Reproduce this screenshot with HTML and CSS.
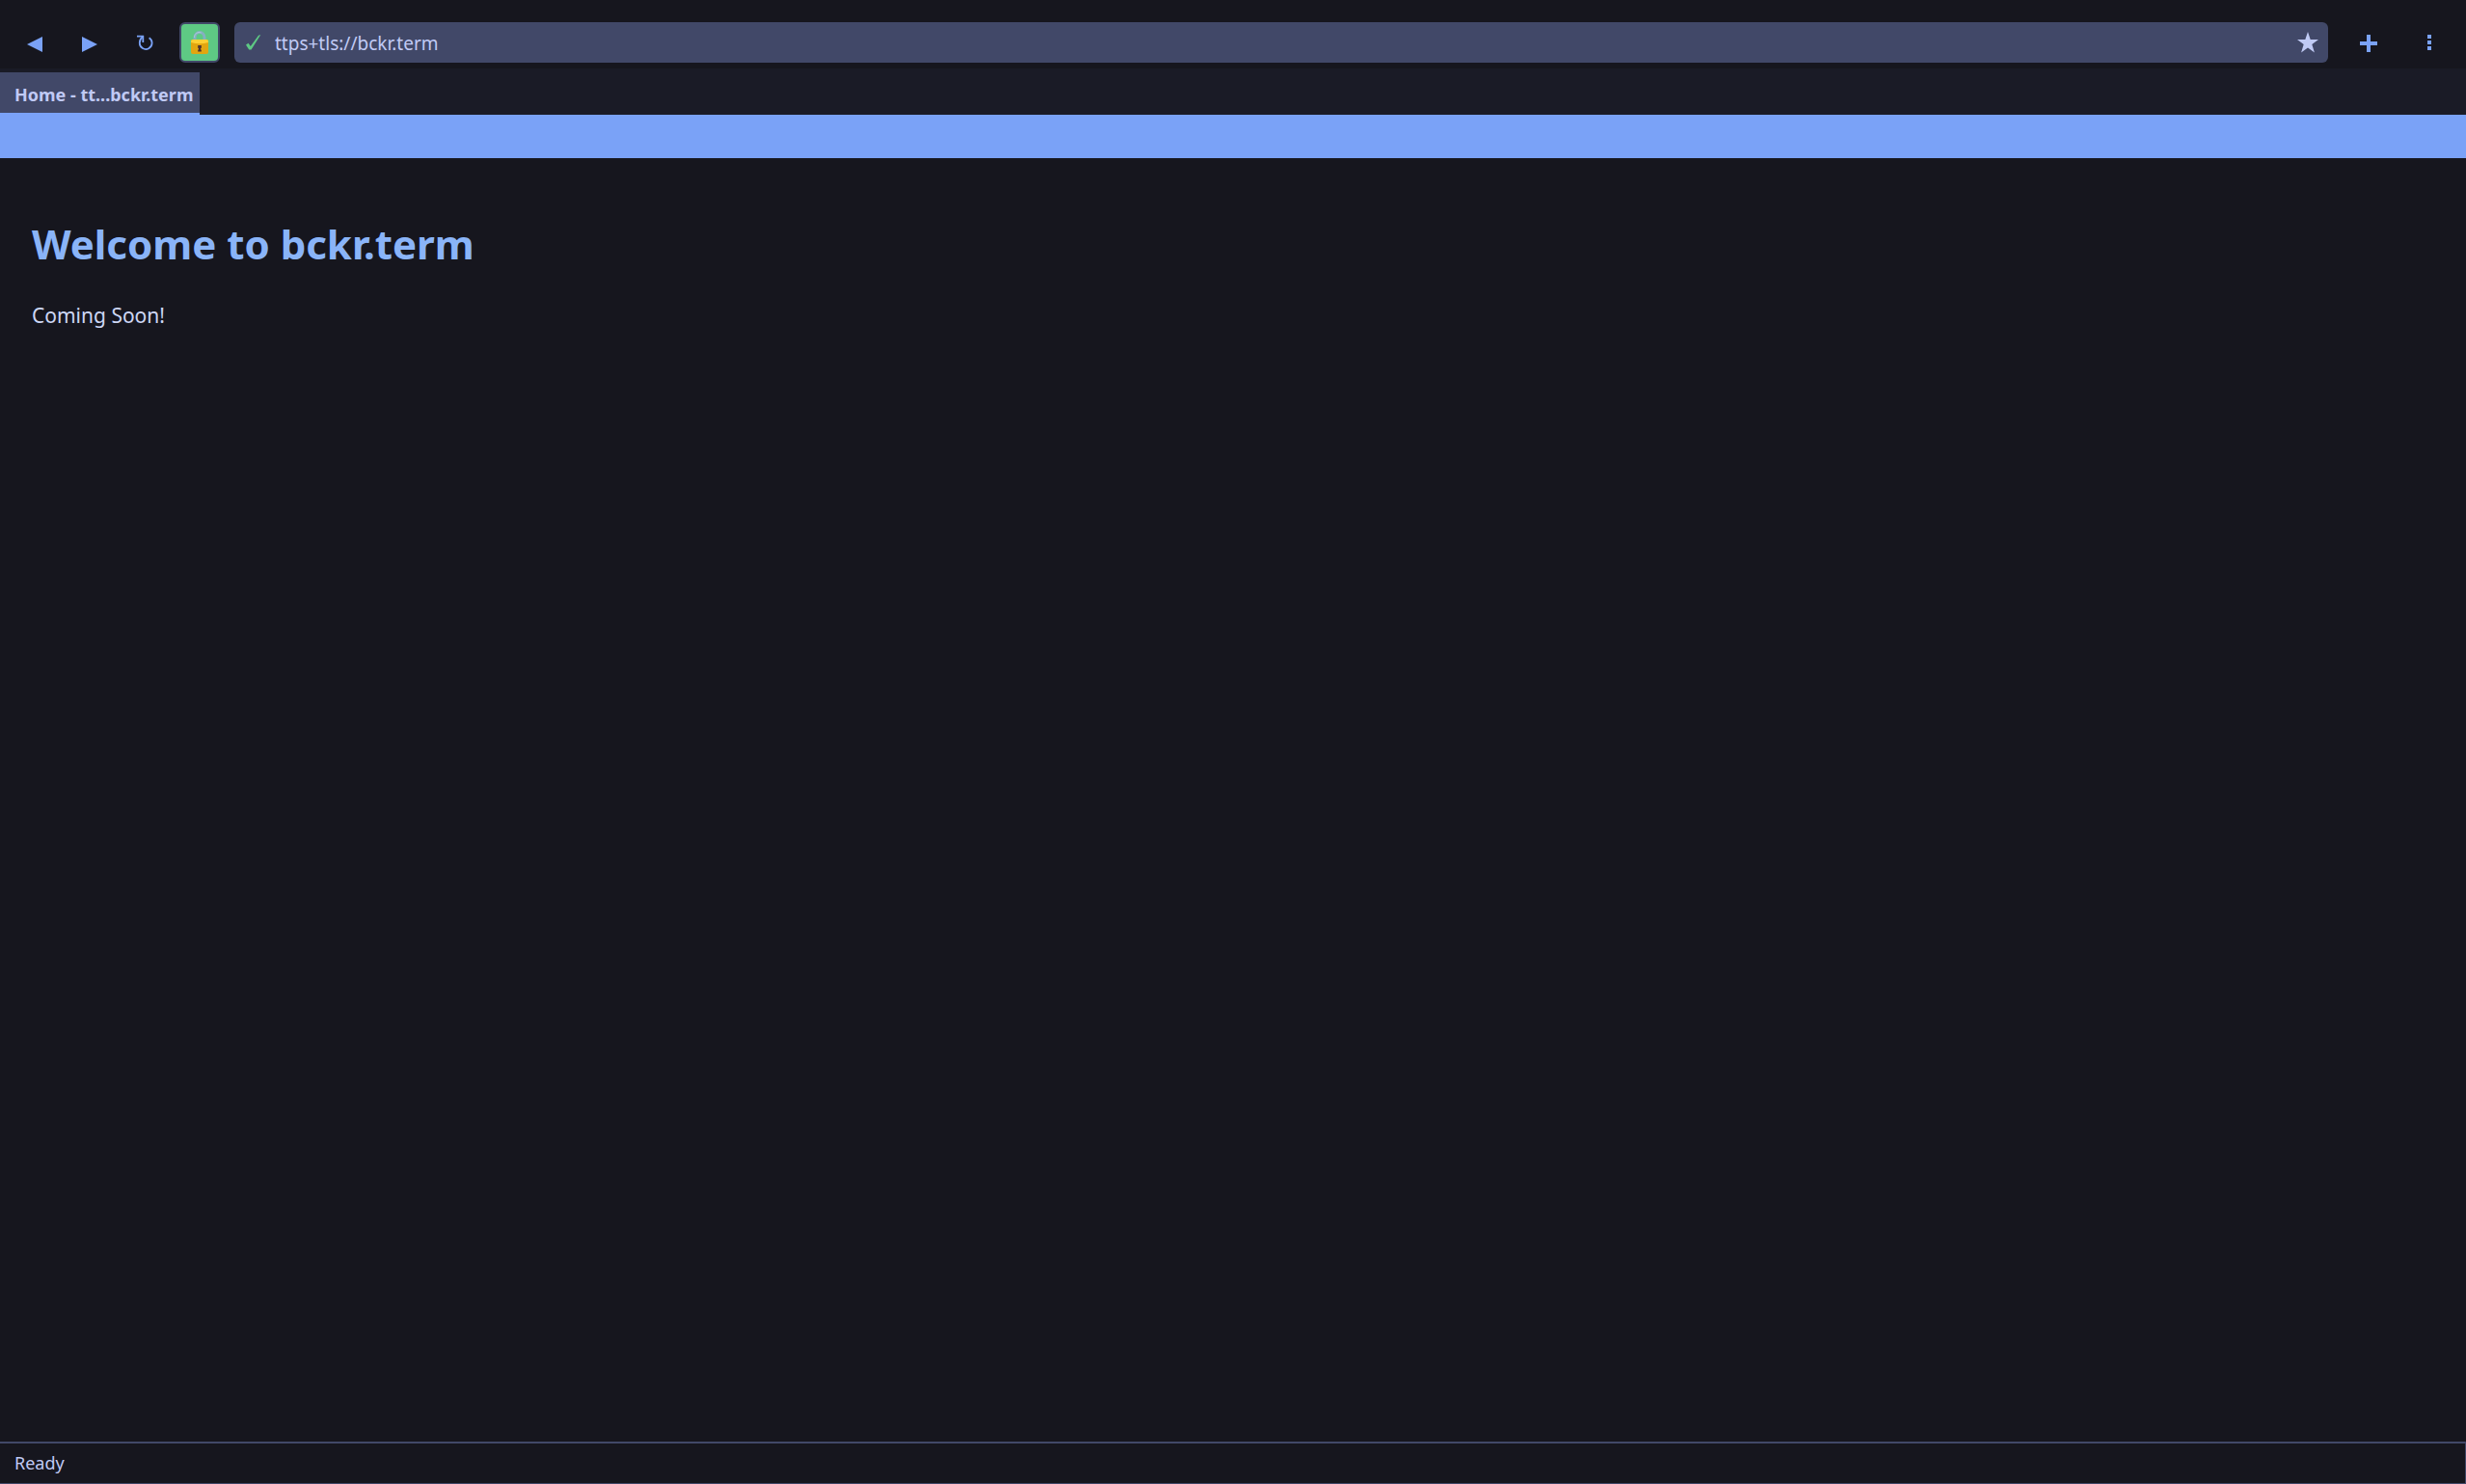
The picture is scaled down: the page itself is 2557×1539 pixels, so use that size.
FILE: index.html
```html
<!DOCTYPE html>
<html lang="en">
<head>
    <meta charset="UTF-8">
    <meta name="viewport" content="width=device-width, initial-scale=1.0">
    <title>Home - bckr.term</title>
    <link rel="stylesheet" href="styles.css">
</head>
<body>

    <header class="toolbar">
        <button class="tool" aria-label="Back">
            <svg width="16" height="20" viewBox="0 0 16 20"><path d="M16 4v16L0 12z" fill="currentColor"/></svg>
        </button>
        <button class="tool" aria-label="Forward">
            <svg width="16" height="20" viewBox="0 0 16 20"><path d="M0 4v16l16-8z" fill="currentColor"/></svg>
        </button>
        <button class="tool" aria-label="Reload">
            <svg width="18" height="18" viewBox="0 0 18 18" fill="none" stroke="currentColor" stroke-width="1.8">
                <path d="M1 2.700h6.300V9"/>
                <path d="M7 3C4.500 5 3.700 7.200 3.800 9.500A6.400 6.400 0 1 0 13.600 4.200"/>
            </svg>
        </button>
        <button class="tool lock" aria-label="Secure connection">
            <svg width="18" height="26" viewBox="0 0 18 26">
                <path d="M4 13V8a5 5.500 0 0 1 10 0V13" fill="none" stroke="#84b0c1" stroke-width="3"/>
                <path d="M3.600 8a5 5 0 0 1 7-5" fill="none" stroke="#b0ccd8" stroke-width="1"/>
                <rect y="10" width="18" height="15" rx="2" fill="#e2a610"/>
                <path d="M0 12a2 2 0 0 1 2-2h14a2 2 0 0 1 2 2v1q-9 2.500-18 0z" fill="#fdd033"/>
                <path d="M7.200 16h3.600v2.800l-.8.700v1h.8v2H7.200v-2H8v-1l-.8-.7z" fill="#4e342e"/>
            </svg>
        </button>

        <div class="address">
            <svg width="16" height="18" viewBox="0 0 16 18"><path d="M0 11.500L2.500 9.800L4.800 13L13 1.800L15.300 1L5.500 16.500H3.200z" fill="#5ec984"/></svg>
            <input class="url" type="text" aria-label="Address" value="ttps+tls://bckr.term">
            <button class="star" aria-label="Bookmark">
                <svg width="22" height="22" viewBox="0 0 22 22"><path d="M11 0l2.700 8H22l-6.700 5 2.600 8.500L11 16.400l-6.900 5.100L6.700 13 0 8h8.300z" fill="currentColor"/></svg>
            </button>
        </div>

        <button class="tool new-tab" aria-label="New tab">
            <svg width="18" height="20" viewBox="0 0 18 20"><path d="M7 2h4v7h7v4h-7v7H7v-7H0V9h7z" fill="currentColor"/></svg>
        </button>
        <button class="tool" aria-label="Menu">
            <svg width="4" height="16" viewBox="0 0 4 16"><path d="M0 0h4v4H0zM0 6h4v4H0zM0 12h4v4H0z" fill="currentColor"/></svg>
        </button>
    </header>

    <nav class="tabs">
        <a class="tab" href="#home">Home - tt...bckr.term</a>
    </nav>
    <div class="banner"></div>

    <main class="content" id="home">
        <h1>Welcome to bckr.term</h1>
        <p>Coming Soon!</p>
    </main>

    <footer class="status">Ready</footer>

</body>
</html>
```
FILE: styles.css
```css
* {
    box-sizing: border-box;
}
body {
    display: flex;
    flex-direction: column;
    min-height: 100vh;
    margin: 0;
    background-color: #16161e;
    color: #c0caf5;
    font-family: "Noto Sans", sans-serif;
    font-size: 18px;
    line-height: 24px;
}
svg {
    display: block;
}
button {
    padding: 0;
    border: none;
    background: none;
    color: #7aa2f7;
}

/* toolbar */
.toolbar {
    display: flex;
    gap: 15px;
    padding: 23px 17px 6px 15px;
}
.tool {
    display: flex;
    align-items: center;
    justify-content: center;
    width: 42px;
    height: 42px;
}
.lock {
    background-color: #5ec984;
    border: 2px solid #414868;
    border-radius: 6px;
}
.new-tab {
    width: 54px;
}
.address {
    display: flex;
    flex: 1;
    align-items: center;
    gap: 14px;
    padding: 0 10px 0 12px;
    background-color: #414868;
    border-radius: 6px;
}
.url {
    flex: 1;
    padding: 2px 0 0;
    border: none;
    outline: none;
    background: none;
    color: #c0caf5;
    font: inherit;
    font-size: 19px;
}
.star {
    color: #c0caf5;
}

/* tabs */
.tabs {
    display: flex;
    padding-top: 4px;
    background-color: #1a1b26;
}
.tab {
    padding: 11px 7px 7px 15px;
    border-bottom: 2px solid #7aa2f7;
    background-color: #414868;
    color: #c0caf5;
    font-weight: bold;
    text-decoration: none;
}
.banner {
    height: 45px;
    background-color: #7aa2f7;
}

/* page */
.content {
    flex: 1;
    padding: 59px 33px;
    font-size: 21px;
    line-height: 30px;
}
.content h1 {
    margin: 0;
    color: #8ab4f8;
    font-size: 42px;
    line-height: 60px;
}
.content p {
    margin: 29px 0 0;
    color: #cdd6f4;
}

.status {
    padding: 8px 15px 9px;
    border: solid #414868;
    border-width: 2px 1px 1px 0;
}
```
